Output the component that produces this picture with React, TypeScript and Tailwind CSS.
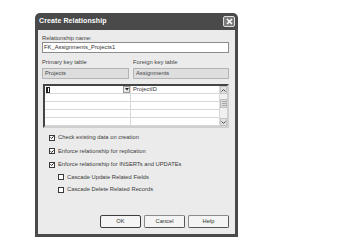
import React from "react";

const font = { fontFamily: '"Liberation Sans", Arial, sans-serif' };

const Check = ({ checked }: { checked: boolean }) => (
  <span className="w-[6px] h-[6px] border border-[#3a3a3a] bg-white flex items-center justify-center shrink-0">
    {checked && (
      <svg width="5" height="5" viewBox="0 0 5 5">
        <path d="M0.6 2.3 L2 3.7 L4.5 1" stroke="#111" strokeWidth="1.2" fill="none" />
      </svg>
    )}
  </span>
);

const CheckRow = ({ label, checked, indent }: { label: string; checked: boolean; indent?: boolean }) => (
  <div className={`flex items-center gap-[3px] h-[7px] ${indent ? "pl-[9px]" : ""}`}>
    <Check checked={checked} />
    <span className="text-[5.8px] leading-[7px] text-[#3a3a3a] whitespace-nowrap">{label}</span>
  </div>
);

const Btn = ({ label, def }: { label: string; def?: boolean }) => (
  <div
    className={`w-[41px] h-[13px] rounded-[2px] bg-[#f4f4f4] flex items-center justify-center text-[5.8px] text-[#333] ${
      def ? "border border-[#3c3c3c]" : "border border-[#8a8a8a] border-b-[#555] border-r-[#555]"
    }`}
  >
    {label}
  </div>
);

const GridRow = ({ first }: { first?: boolean }) => (
  <div className="flex h-[8px] border-b border-[#d8d8d8]">
    <div className="w-[86px] border-r border-[#d8d8d8] flex items-center justify-between pl-[1px]">
      {first && (
        <>
          <span className="w-[4px] h-[6px] bg-[#222] flex items-center justify-center">
            <span className="w-[1px] h-[4px] bg-white" />
          </span>
          <span className="w-[7px] h-[7px] bg-[#e6e6e6] border border-[#999] flex items-center justify-center">
            <svg width="4" height="3" viewBox="0 0 4 3">
              <path d="M0 0 H4 L2 2.5 Z" fill="#222" />
            </svg>
          </span>
        </>
      )}
    </div>
    <div className="flex-1 flex items-center pl-[2px] text-[5.8px] text-[#333]">{first ? "ProjectID" : ""}</div>
  </div>
);

export default function App() {
  return (
    <div className="w-[350px] h-[242px] bg-white overflow-hidden" style={font}>
      <div className="ml-[35px] mt-[13px] w-[203px] h-[224px] bg-[#4a4a4a] rounded-t-[5px] flex flex-col px-[3px] pb-[3px]">
        {/* title bar */}
        <div className="h-[17px] flex items-center justify-between pl-[1px]">
          <span className="text-white font-bold text-[7px] tracking-[0.1px]">Create Relationship</span>
          <span className="w-[12px] h-[11px] rounded-[2px] border border-[#e0e0e0] bg-[#7a7a7a] flex items-center justify-center">
            <svg width="7" height="7" viewBox="0 0 7 7">
              <path d="M1 1 L6 6 M6 1 L1 6" stroke="white" strokeWidth="1.5" />
            </svg>
          </span>
        </div>

        {/* body */}
        <div className="flex-1 bg-[#ebebeb] pl-[4px] pr-[6px] pt-[5px] flex flex-col">
          <div className="text-[5.8px] leading-[7px] text-[#444]">Relationship name:</div>
          <div className="h-[11px] bg-white border border-[#8c8c8c] flex items-center pl-[1px] text-[5.8px] text-[#333]">
            FK_Assignments_Projects1
          </div>

          <div className="flex gap-[4px] mt-[6px]">
            <div className="w-[87px] flex flex-col">
              <div className="text-[5.8px] leading-[7px] text-[#444]">Primary key table</div>
              <div className="mt-[2px] h-[11px] bg-[#dedede] border border-[#b4b4b4] flex items-center pl-[2px] text-[5.8px] text-[#444]">
                Projects
              </div>
            </div>
            <div className="flex-1 flex flex-col">
              <div className="text-[5.8px] leading-[7px] text-[#444]">Foreign key table</div>
              <div className="mt-[2px] h-[11px] bg-[#dedede] border border-[#b4b4b4] flex items-center pl-[2px] text-[5.8px] text-[#444]">
                Assignments
              </div>
            </div>
          </div>

          {/* grid */}
          <div className="mt-[5px] ml-[1px] h-[44px] border-2 border-[#444] border-b-[#cfcfcf] border-r-[#cfcfcf] bg-white flex">
            <div className="flex-1 flex flex-col">
              <GridRow first />
              <GridRow />
              <GridRow />
              <GridRow />
              <GridRow />
            </div>
            <div className="w-[8px] bg-[#f0f0f0] flex flex-col justify-between border-l border-[#d8d8d8]">
              <div className="h-[8px] bg-[#e2e2e2] border border-[#c4c4c4] flex items-center justify-center">
                <svg width="5" height="3" viewBox="0 0 5 3">
                  <path d="M0.5 2.6 L2.5 0.6 L4.5 2.6" stroke="#444" strokeWidth="1" fill="none" />
                </svg>
              </div>
              <div className="h-[9px] bg-[#dcdcdc] border border-[#bdbdbd] -mt-[6px] flex flex-col justify-center items-center gap-[1px]">
                <span className="w-[4px] h-px bg-[#aaa]" />
                <span className="w-[4px] h-px bg-[#aaa]" />
                <span className="w-[4px] h-px bg-[#aaa]" />
              </div>
              <div className="h-[8px] bg-[#e2e2e2] border border-[#c4c4c4] flex items-center justify-center">
                <svg width="5" height="3" viewBox="0 0 5 3">
                  <path d="M0.5 0.4 L2.5 2.4 L4.5 0.4" stroke="#444" strokeWidth="1" fill="none" />
                </svg>
              </div>
            </div>
          </div>

          {/* options */}
          <div className="mt-[6px] pl-[7px] flex flex-col gap-[6.5px]">
            <CheckRow checked label="Check existing data on creation" />
            <CheckRow checked label="Enforce relationship for replication" />
            <CheckRow checked label="Enforce relationship for INSERTs and UPDATEs" />
            <div className="flex flex-col gap-[5.5px] -mt-[1px]">
              <CheckRow indent checked={false} label="Cascade Update Related Fields" />
              <CheckRow indent checked={false} label="Cascade Delete Related Records" />
            </div>
          </div>

          {/* buttons */}
          <div className="mt-auto mb-[6px] flex justify-end gap-[3px]">
            <Btn def label="OK" />
            <Btn label="Cancel" />
            <Btn label="Help" />
          </div>
        </div>
      </div>
    </div>
  );
}
